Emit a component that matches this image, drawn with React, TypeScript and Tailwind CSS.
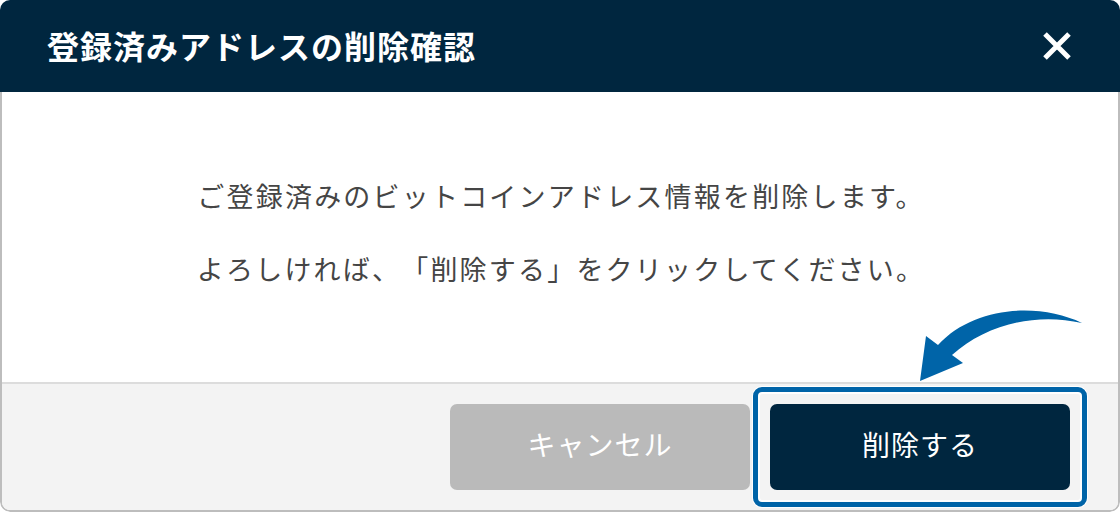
import React from "react";

export default function App() {
  const font = { fontFamily: '"Noto Sans CJK JP", "Noto Sans", sans-serif' };
  return (
    <div className="relative w-[1120px] h-[512px] bg-white [text-spacing-trim:space-all]" style={font}>
      <div className="flex flex-col w-full h-full rounded-[10px] overflow-hidden">
        <div className="flex items-center justify-between h-[92px] bg-[#00263f] pl-[47px] pr-[48px] shrink-0">
          <h1 className="text-[32px] font-bold text-white tracking-[1px] leading-none pb-[2px]">登録済みアドレスの削除確認</h1>
          <svg width="30" height="30" viewBox="0 0 30 30" className="text-white">
            <path d="M3 3 L27 27 M27 3 L3 27" stroke="currentColor" strokeWidth="5" strokeLinecap="butt" />
          </svg>
        </div>
        <div className="flex flex-col flex-1 border-x-2 border-b-2 border-[#bdbdbd] rounded-b-[10px] overflow-hidden">
          <div className="flex flex-col flex-1 items-center justify-center gap-[43px] text-[27px] leading-[30px] text-[#454545] tracking-[2.2px] pb-[10px] pl-[2px]">
            <p className="[text-spacing-trim:space-all]">ご登録済みのビットコインアドレス情報を削除します。</p>
            <p className="[text-spacing-trim:space-all]">よろしければ、「削除する」をクリックしてください。</p>
          </div>
          <div className="flex justify-end items-center gap-[20px] h-[128px] shrink-0 bg-[#f3f3f3] border-t-2 border-[#dcdcdc] pr-[48px]">
            <button className="w-[300px] h-[86px] rounded-[7px] bg-[#bababa] text-white text-[28px] tracking-[1px] pb-[6px]">キャンセル</button>
            <div className="relative">
              <div className="absolute -inset-[17px] rounded-[9px] border-[5px] border-[#0064a8] shadow-[0_0_0_1px_#ffffff,inset_0_0_0_2px_#ffffff]" />
              <button className="relative w-[300px] h-[86px] rounded-[7px] bg-[#00263f] text-white text-[28px] tracking-[1px] pb-[6px]">削除する</button>
            </div>
          </div>
        </div>
      </div>
      <svg className="absolute inset-0 pointer-events-none" width="1120" height="512" viewBox="0 0 1120 512">
        <path
          d="M1082 323 C1040 303, 975 305, 938 345 L926 336 L920 381 L963 363 L952 355 C985 325, 1035 312, 1082 323 Z"
          fill="#0064a8"
        />
      </svg>
    </div>
  );
}
